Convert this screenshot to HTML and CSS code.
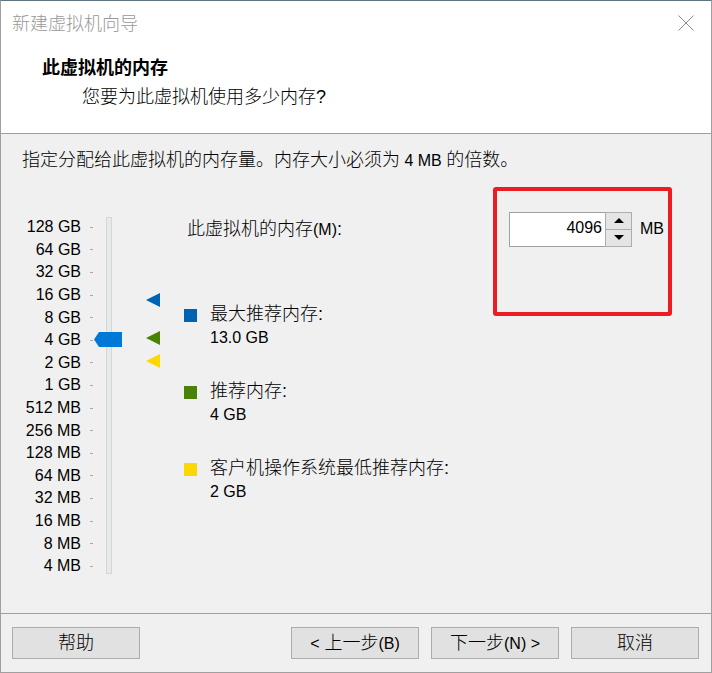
FILE: index.html
```html
<!DOCTYPE html>
<html>
	<head>
		<meta charset="utf-8">
		<title>新建虚拟机向导</title>
		<link rel="stylesheet" href="styles.css">
	</head>
<body>
	<div class="window">
		<div class="titlebar">
			<span class="caption">新建虚拟机向导</span>
			<svg class="close" width="16" height="16" viewBox="0 0 16 16"><path d="M0.5 0.5 L15.5 15.5 M15.5 0.5 L0.5 15.5" stroke="#8a8a8a" stroke-width="1" fill="none"/></svg>
		</div>
		<div class="header">
			<h1>此虚拟机的内存</h1>
			<p>您要为此虚拟机使用多少内存?</p>
		</div>
		<div class="content">
			<p class="hint">指定分配给此虚拟机的内存量。内存大小必须为<span class="en"> 4 MB </span>的倍数。</p>
			<div class="main">
				<div class="scale">
					<ul class="ticks">
						<li>128 GB</li>
						<li>64 GB</li>
						<li>32 GB</li>
						<li>16 GB</li>
						<li>8 GB</li>
						<li>4 GB</li>
						<li>2 GB</li>
						<li>1 GB</li>
						<li>512 MB</li>
						<li>256 MB</li>
						<li>128 MB</li>
						<li>64 MB</li>
						<li>32 MB</li>
						<li>16 MB</li>
						<li>8 MB</li>
						<li>4 MB</li>
					</ul>
					<div class="track"></div>
					<div class="thumb"></div>
					<i class="mark mark-max"></i>
					<i class="mark mark-rec"></i>
					<i class="mark mark-min"></i>
				</div>
				<div class="settings">
					<div class="mem-row">
						<label>此虚拟机的内存<span class="en">(M)</span>:</label>
						<div class="spin">
							<div class="spin-value">4096</div>
							<div class="spin-btns">
								<span class="up"></span>
								<span class="down"></span>
							</div>
						</div>
						<span class="unit">MB</span>
						<div class="highlight"></div>
					</div>
					<div class="legend">
						<div class="item">
							<div class="item-head"><i class="sq sq-max"></i>最大推荐内存:</div>
							<div class="item-val">13.0 GB</div>
						</div>
						<div class="item">
							<div class="item-head"><i class="sq sq-rec"></i>推荐内存:</div>
							<div class="item-val">4 GB</div>
						</div>
						<div class="item">
							<div class="item-head"><i class="sq sq-min"></i>客户机操作系统最低推荐内存:</div>
							<div class="item-val">2 GB</div>
						</div>
					</div>
				</div>
			</div>
		</div>
		<div class="footer">
			<button class="btn">帮助</button>
			<button class="btn btn-prev"><span class="en">&lt;</span> 上一步<span class="en">(B)</span></button>
			<button class="btn">下一步<span class="en">(N) &gt;</span></button>
			<button class="btn">取消</button>
		</div>
	</div>
</body>
</html>
```

FILE: styles.css
```css
*{margin: 0;padding: 0;box-sizing: border-box;}
ul{list-style: none;}
html{background: #f0f0f0;}
body{
	font: 300 18px/24px "Liberation Sans", "Noto Sans CJK SC", sans-serif;
	color: #000;
}
.en{font-size: 16px;font-weight: normal;}

.window{
	width: 712px;
	height: 673px;
	display: flex;
	flex-direction: column;
	border-top: 1px solid #607582;
	border-left: 1px solid #a0a0a0;
	border-right: 1px solid #a0a0a0;
	border-bottom: 1px solid #a0a0a0;
	background: #f0f0f0;
}

/* title bar + header (white part) */
.titlebar{
	height: 45px;
	display: flex;
	align-items: center;
	justify-content: space-between;
	padding: 0 17px 0 11px;
	background: #fff;
}
.caption{color: #999;}
.close{display: block;margin-top: -2px;}

.header{
	height: 88px;
	padding: 10px 0 0 41px;
	background: #fff;
	border-bottom: 1px solid #a0a0a0;
}
.header h1{
	font-size: 18px;
	font-weight: bold;
	line-height: 24px;
}
.header p{
	margin-top: 5px;
	padding-left: 40px;
}

/* body */
.content{
	flex: 1;
	padding: 14px 0 0 0;
}
.hint{padding-left: 21px;}

.main{
	display: flex;
	margin-top: 38px;
}

/* slider */
.scale{
	position: relative;
	display: flex;
	align-items: flex-start;
	width: 183px;
}
.ticks{padding-top: 5px;}
.ticks li{
	width: 92px;
	height: 22.6px;
	display: flex;
	align-items: center;
	justify-content: flex-end;
	font-size: 16px;
	font-weight: normal;
}
.ticks li:after{
	content: '';
	width: 3px;
	height: 1px;
	margin-left: 9px;
	background: #a8a8a8;
}
.track{
	width: 6px;
	height: 357px;
	margin: 6px 0 0 13px;
	background: #e7eaea;
	border: 1px solid #d6d6d6;
}
.thumb{
	position: absolute;
	left: 93px;
	top: 121px;
	width: 28px;
	height: 15px;
	background: #0078d7;
	clip-path: polygon(0 50%, 5px 0, 100% 0, 100% 100%, 5px 100%);
}
.mark{
	position: absolute;
	left: 145px;
	width: 14px;
	height: 14px;
	clip-path: polygon(0 50%, 100% 0, 100% 100%);
}
.mark-max{top: 82px;background: #0063b1;}
.mark-rec{top: 120px;background: #498205;}
.mark-min{top: 143px;background: #fcd800;}

/* right side */
.settings{flex: 1;}
.mem-row{
	position: relative;
	display: flex;
	align-items: flex-start;
	height: 36px;
}
.mem-row label{
	width: 325px;
	padding: 6px 0 0 3px;
}
.spin{
	display: flex;
	margin-top: 1px;
	height: 35px;
}
.spin-value{
	width: 96px;
	height: 35px;
	padding-right: 3px;
	text-align: right;
	font-size: 16px;
	font-weight: normal;
	line-height: 29px;
	background: #fff;
	border: 1px solid #a0a0a0;
	border-right: none;
}
.spin-btns{
	width: 27px;
	display: flex;
	flex-direction: column;
	border: 1px solid #adadad;
}
.spin-btns span{
	flex: 1;
	position: relative;
	background: #e5e5e5;
}
.spin-btns .up{border-bottom: 1px solid #adadad;}
.spin-btns span:after{
	content: '';
	position: absolute;
	left: 8px;
	top: 5px;
	border-left: 5px solid transparent;
	border-right: 5px solid transparent;
}
.spin-btns .up:after{border-bottom: 5px solid #000;}
.spin-btns .down:after{border-top: 5px solid #000;}
.unit{
	margin-left: 8px;
	padding-top: 6px;
	font-size: 16px;
	font-weight: normal;
}
.highlight{
	position: absolute;
	left: 309px;
	top: -24px;
	width: 179px;
	height: 129px;
	border: 4px solid #ec1c24;
	border-radius: 3px;
}

.legend{margin-top: 55px;}
.item{margin-bottom: 29px;}
.item-head{
	display: flex;
	align-items: center;
}
.sq{
	width: 13px;
	height: 13px;
	margin: 2px 13px 0 0;
}
.sq-max{background: #0063b1;}
.sq-rec{background: #498205;}
.sq-min{background: #fcd800;}
.item-val{
	padding-left: 26px;
	font-size: 16px;
	font-weight: normal;
}

/* footer */
.footer{
	height: 59px;
	display: flex;
	gap: 12px;
	padding: 13px 12px 0 11px;
	border-top: 1px solid #a0a0a0;
}
.btn{
	width: 128px;
	height: 32px;
	font: 300 18px/24px "Liberation Sans", "Noto Sans CJK SC", sans-serif;
	color: #000;
	background: #e1e1e1;
	border: 1px solid #adadad;
}
.btn-prev{margin-left: auto;}
```
